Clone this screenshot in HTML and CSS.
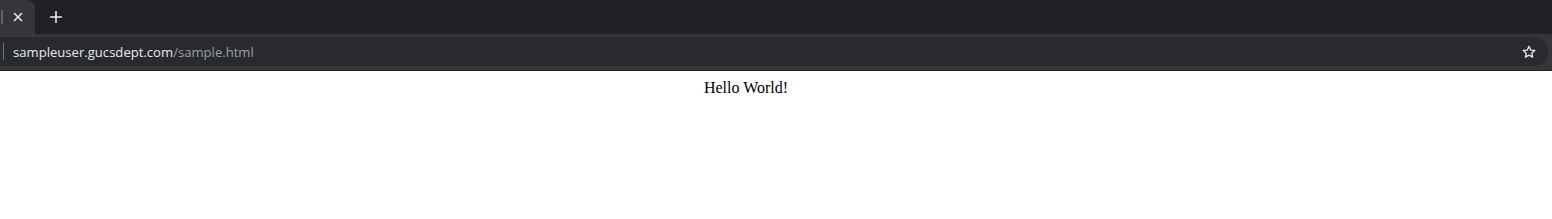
FILE: index.html
```html
<!DOCTYPE html>
<html lang="en">
<head>
    <meta charset="UTF-8">
    <title>sample</title>
    <link rel="stylesheet" href="styles.css">
</head>
<body>
    <!-- Browser chrome -->
    <div class="tabstrip">
        <div class="tab">
            <span class="tab-edge"></span>
            <span class="tab-close">
                <svg width="10" height="10" viewBox="0 0 10 10">
                    <path d="M1 1l8 8M9 1l-8 8" stroke="#e8eaed" stroke-width="1.5" fill="none"/>
                </svg>
            </span>
        </div>
        <div class="new-tab">
            <svg width="14" height="14" viewBox="0 0 14 14">
                <path d="M7 1v12M1 7h12" stroke="#e8eaed" stroke-width="1.6" fill="none"/>
            </svg>
        </div>
    </div>

    <div class="toolbar">
        <div class="omnibox">
            <span class="sep"></span>
            <span class="url"><span class="host">sampleuser.gucsdept.com</span><span class="path">/sample.html</span></span>
            <span class="star">
                <svg width="16" height="16" viewBox="0 0 24 24">
                    <path d="M12 3.5l2.6 5.6 6.1.6-4.6 4.1 1.3 6-5.4-3.1-5.4 3.1 1.3-6-4.6-4.1 6.1-.6z" stroke="#e8eaed" stroke-width="2" stroke-linejoin="round" fill="none"/>
                </svg>
            </span>
        </div>
    </div>

    <!-- Page content -->
    <div class="page">
        <p class="hello">Hello World!</p>
    </div>
</body>
</html>
```

FILE: styles.css
```css
body {
    margin: 0;
    padding: 0;
    background-color: #fff;
}

/* Tab strip */
.tabstrip {
    height: 34px;
    background-color: #202124;
    display: flex;
    align-items: stretch;
}

.tab {
    width: 35px;
    background-color: #35363a;
    border-top-right-radius: 8px;
    display: flex;
    align-items: center;
}

.tab-edge {
    width: 2px;
    height: 14px;
    margin-left: 1px;
    background-color: #5f6165;
}

.tab-close {
    margin-left: 10px;
}

.tab-close svg,
.new-tab svg,
.star svg {
    display: block;
}

.new-tab {
    width: 28px;
    display: flex;
    align-items: center;
    justify-content: center;
    margin-left: 7px;
}

/* Toolbar and address bar */
.toolbar {
    height: 37px;
    background-color: #35363a;
    padding-top: 3px;
    box-sizing: border-box;
    border-bottom: 1px solid #1f2023;
}

.omnibox {
    height: 29px;
    margin-right: 4px;
    background-color: #292a2d;
    border-top-right-radius: 15px;
    border-bottom-right-radius: 15px;
    display: flex;
    align-items: center;
}

.sep {
    width: 1px;
    height: 17px;
    margin-left: 3px;
    background-color: #6f7175;
}

.url {
    font-family: "Open Sans", sans-serif;
    font-size: 13.1px;
    margin-left: 9px;
    flex-grow: 1;
}

.host {
    color: #e8eaed;
}

.path {
    color: #9aa0a6;
}

.star {
    width: 28px;
    height: 28px;
    border-radius: 50%;
    display: flex;
    align-items: center;
    justify-content: center;
    margin-right: 5px;
}

/* Page */
.page {
    padding: 0 60px 0 0;
}

.hello {
    font-family: "Liberation Serif", serif;
    font-size: 16px;
    text-align: center;
    margin: 8px 0;
    color: #000;
}
```
